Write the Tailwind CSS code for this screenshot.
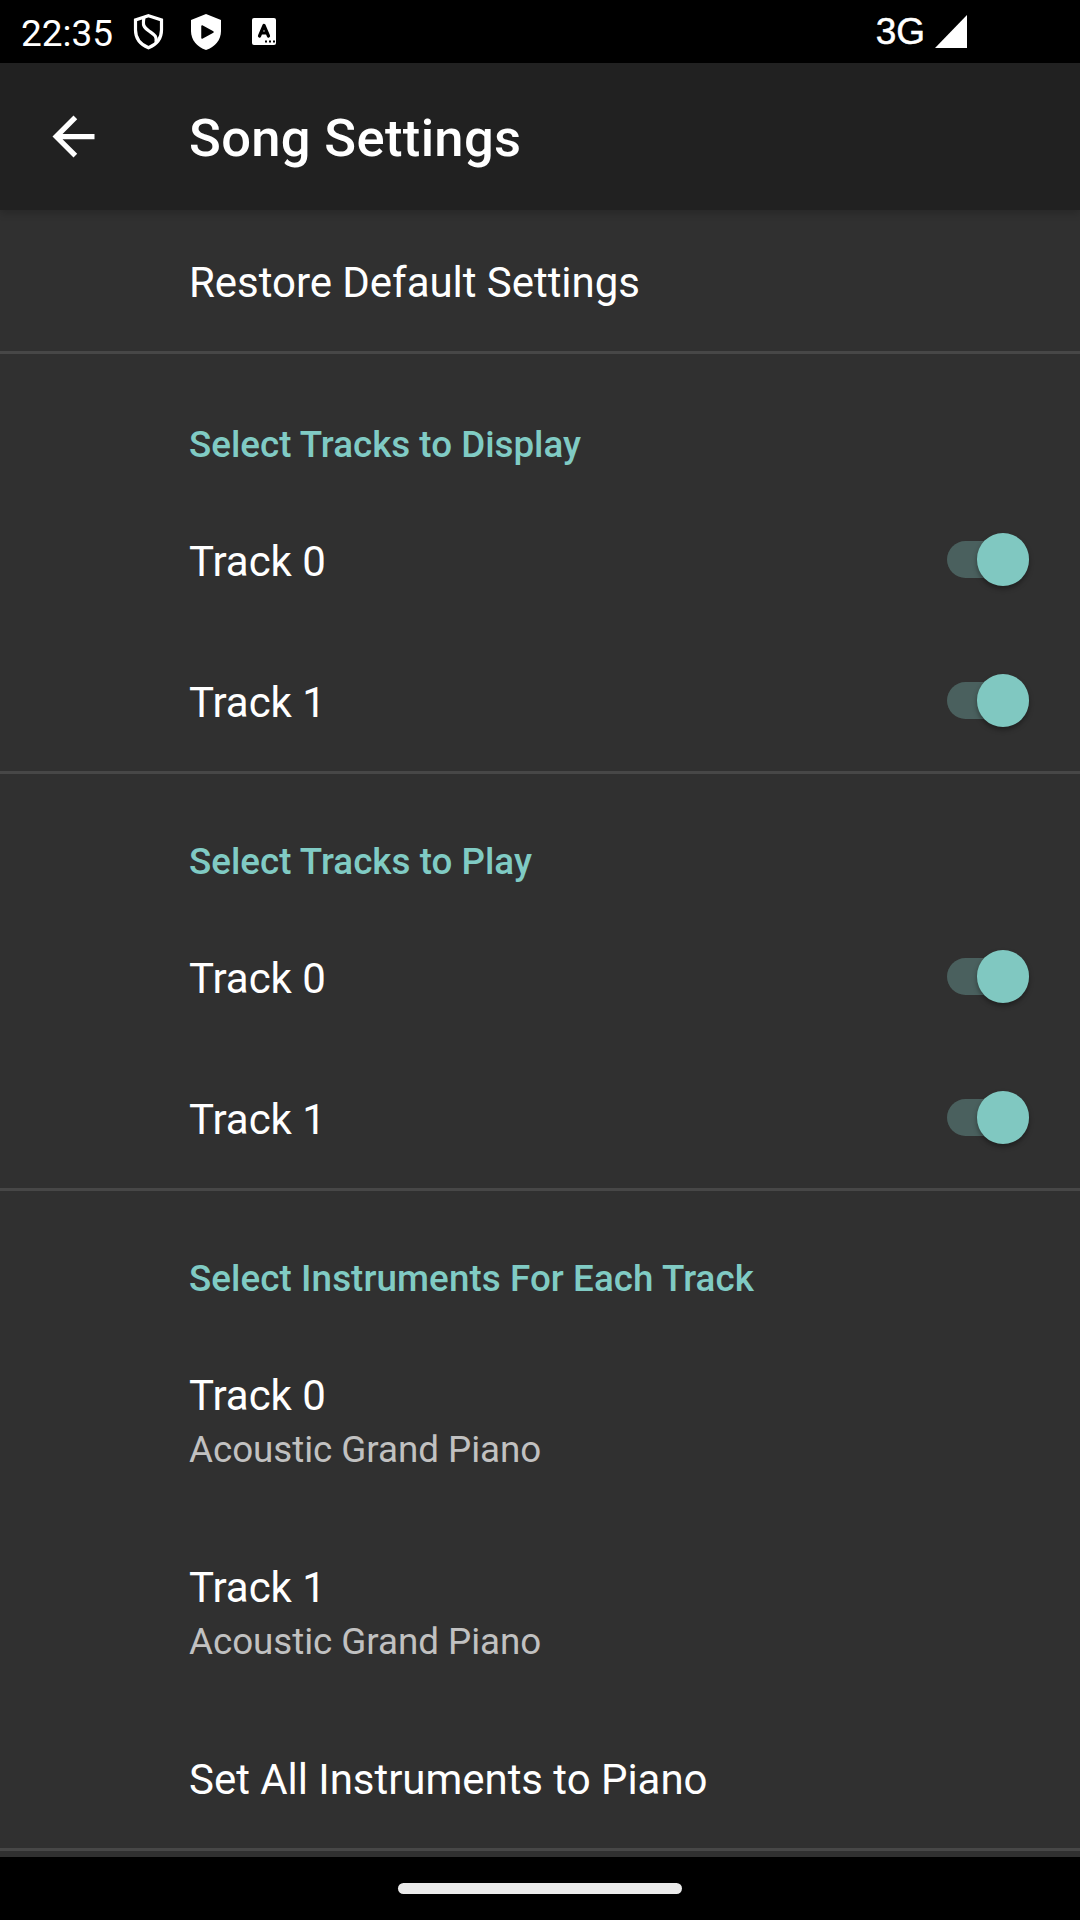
<!DOCTYPE html>
<html lang="en">
<head>
<meta charset="utf-8">
<title>Song Settings</title>
<script src="https://cdn.jsdelivr.net/npm/@tailwindcss/browser@4"></script>
</head>
<body class="w-[1080px] h-[1920px] overflow-hidden bg-[#303030] text-white font-[Roboto,sans-serif] flex flex-col">
<header class="h-[63px] shrink-0 bg-black flex items-center pl-[21px] pr-[113px]">
  <span class="text-[37px] leading-none w-[112px] pt-[3px]">22:35</span>
  <svg class="w-[32px] h-[36px]" viewBox="0 0 32 36" fill="none" stroke="white" stroke-width="3.200"><path d="M15.500 1.800 28.500 6v10c0 8.500-5 14.500-13 17.800C7.500 30.500 2.500 24.500 2.500 16V6Z"/><path d="M11 3.500C9.500 11 10.500 13 16 17s8 5 7 11"/></svg>
  <svg class="w-[30px] h-[36px] ml-[26px]" viewBox="0 0 30 36"><path fill="white" d="M15 0 30 6v11c0 9-6 16-15 19C6 33 0 26 0 17V6Z"/><path d="M11 12v12l11-6z" stroke="black" stroke-width="1.500" stroke-linejoin="round"/></svg>
  <svg class="w-[24px] h-[27px] ml-[31px]" viewBox="0 0 24 27"><rect width="24" height="27" rx="2" fill="white"/><path d="M7.500 18 12 7.500 16.500 18M9 15h6" fill="none" stroke="black" stroke-width="3.200" stroke-linejoin="round" stroke-linecap="round"/><path d="M13 23.500h2m2 0h2m2 0h2" stroke="black" stroke-width="2"/></svg>
  <span class="ml-auto text-[37px] leading-none font-['Liberation_Sans',sans-serif] [-webkit-text-stroke:0.5px_white]">3G</span>
  <svg class="w-[32px] h-[33px] ml-[10px]" viewBox="0 0 32 33"><path fill="white" d="M32 0v33H0z"/></svg>
</header>
<div class="h-[147px] shrink-0 bg-[#212121] flex items-center shadow-[0_3px_8px_rgba(0,0,0,0.2)]">
  <svg class="w-[63px] h-[63px] ml-[42px]" viewBox="0 0 24 24" fill="white"><path d="M20 11H7.830l5.590-5.590L12 4l-8 8 8 8 1.410-1.410L7.830 13H20v-2z"/></svg>
  <h1 class="ml-[84px] text-[52.500px] tracking-[0.35px] font-medium pt-[4px]">Song Settings</h1>
</div>
<main class="flex-1 min-h-0 overflow-hidden text-[42px] tracking-[-0.04px]">
  <section class="h-[144px] border-b-3 border-[#474747] flex items-center pl-[189px] pt-1">Restore Default Settings</section>
  <section class="border-b-3 border-[#474747] pl-[189px] pr-[51px]">
    <h2 class="h-[135px] pt-[61px] text-[36.750px] leading-[60px] tracking-normal font-medium text-[#80cbc4]">Select Tracks to Display</h2>
    <div class="h-[141px] flex items-center justify-between"><span class="pt-1">Track 0</span><div class="w-[82.500px] h-[37px] rounded-full bg-[#4a605e] flex items-center justify-end"><div class="size-[52.500px] rounded-full bg-[#80c8c1] shadow-[0_3px_5px_rgba(0,0,0,0.35)]"></div></div></div>
    <div class="h-[141px] flex items-center justify-between"><span class="pt-1">Track 1</span><div class="w-[82.500px] h-[37px] rounded-full bg-[#4a605e] flex items-center justify-end"><div class="size-[52.500px] rounded-full bg-[#80c8c1] shadow-[0_3px_5px_rgba(0,0,0,0.35)]"></div></div></div>
  </section>
  <section class="border-b-3 border-[#474747] pl-[189px] pr-[51px]">
    <h2 class="h-[132px] pt-[58px] text-[36.750px] leading-[60px] tracking-[0.02px] font-medium text-[#80cbc4]">Select Tracks to Play</h2>
    <div class="h-[141px] flex items-center justify-between"><span class="pt-1">Track 0</span><div class="w-[82.500px] h-[37px] rounded-full bg-[#4a605e] flex items-center justify-end"><div class="size-[52.500px] rounded-full bg-[#80c8c1] shadow-[0_3px_5px_rgba(0,0,0,0.35)]"></div></div></div>
    <div class="h-[141px] flex items-center justify-between"><span class="pt-1">Track 1</span><div class="w-[82.500px] h-[37px] rounded-full bg-[#4a605e] flex items-center justify-end"><div class="size-[52.500px] rounded-full bg-[#80c8c1] shadow-[0_3px_5px_rgba(0,0,0,0.35)]"></div></div></div>
  </section>
  <section class="border-b-3 border-[#474747] pl-[189px]">
    <h2 class="h-[132px] pt-[58px] text-[36.750px] leading-[60px] tracking-[0.08px] font-medium text-[#80cbc4]">Select Instruments For Each Track</h2>
    <div class="h-[192px] pt-[45px]"><p class="leading-[56px]">Track 0</p><p class="text-[36.750px] leading-[52px] text-[#c1c1c1]">Acoustic Grand Piano</p></div>
    <div class="h-[192px] pt-[45px]"><p class="leading-[56px]">Track 1</p><p class="text-[36.750px] leading-[52px] text-[#c1c1c1]">Acoustic Grand Piano</p></div>
    <div class="h-[141px] flex items-center pt-1">Set All Instruments to Piano</div>
  </section>
</main>
<footer class="h-[63px] shrink-0 bg-black flex items-center justify-center"><div class="w-[284px] h-[11px] rounded-full bg-[#ebebeb]"></div></footer>
</body>
</html>
